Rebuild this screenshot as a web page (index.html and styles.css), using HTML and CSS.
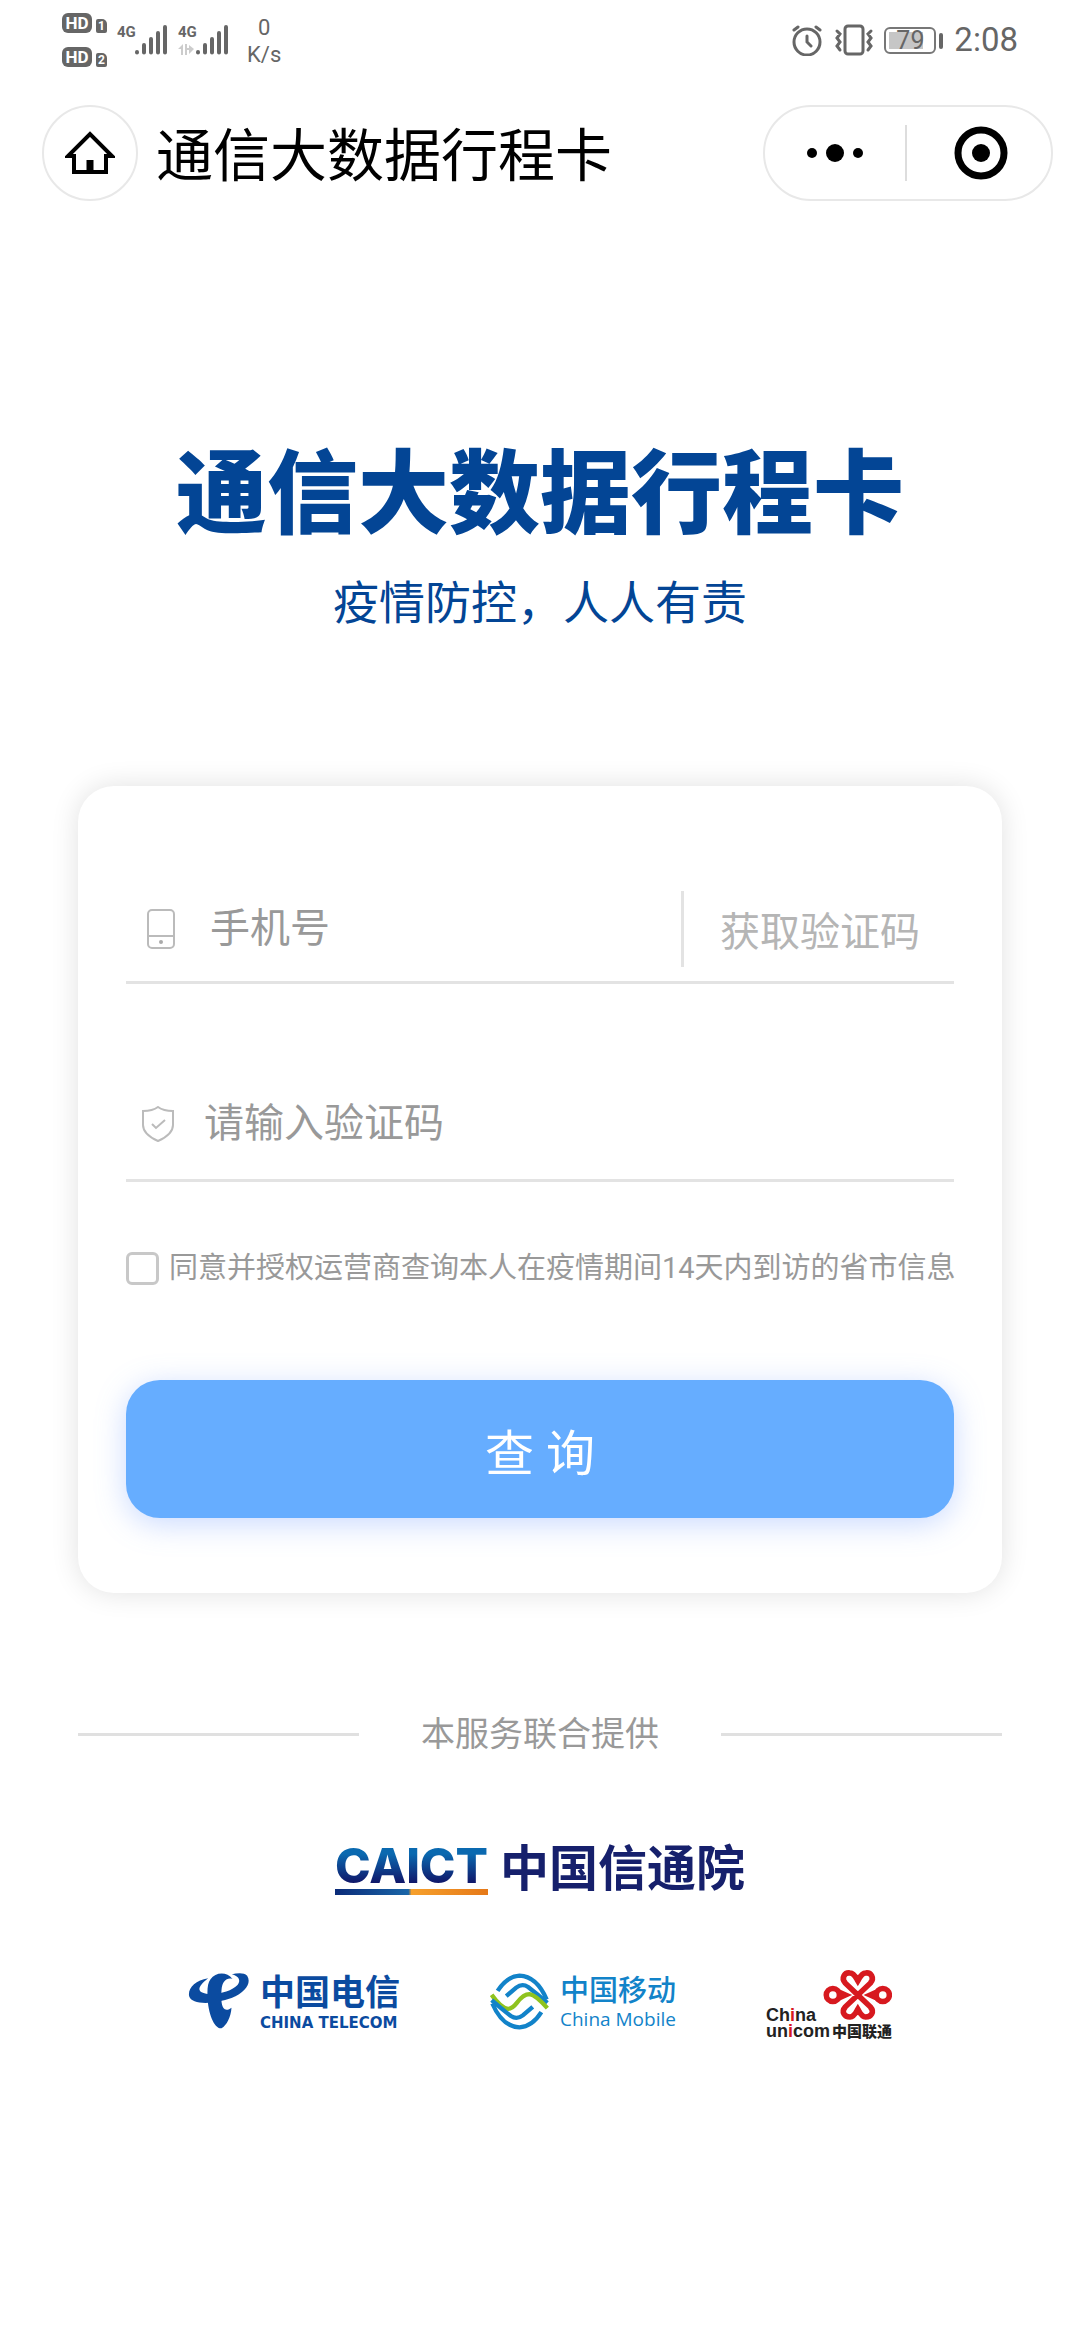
FILE: index.html
```html
<!DOCTYPE html>
<html lang="zh-CN">
<head>
    <meta charset="UTF-8">
    <meta name="viewport" content="width=device-width, initial-scale=1.0">
    <title>通信大数据行程卡</title>
    <link rel="stylesheet" href="styles.css">
</head>
<body>
    <!-- phone status bar -->
    <div class="status-bar">
        <div class="status-left">
            <div class="hd-list">
                <div class="hd"><span class="hd-label">HD</span><span class="hd-num">1</span></div>
                <div class="hd"><span class="hd-label">HD</span><span class="hd-num">2</span></div>
            </div>
            <div class="signal">
                <span class="net">4G</span>
                <svg width="33" height="32" viewBox="0 0 33 32" stroke="#666" stroke-width="4" stroke-linecap="round">
                    <path d="M2 28v.5M9 21v7.500M16 15v13.500M23 9v19.500M30 3v25.500"/>
                </svg>
            </div>
            <div class="signal">
                <span class="net">4G
                    <svg class="net-arrows" width="16" height="12" viewBox="0 0 16 12" fill="#ccc">
                        <path d="M5 0v11H3V5H0zM7 0h2v4h2v2H9v5H7zM11 1l5 4-5 5z"/>
                    </svg>
                </span>
                <svg width="33" height="32" viewBox="0 0 33 32" stroke="#666" stroke-width="4" stroke-linecap="round">
                    <path d="M2 28v.5M9 21v7.500M16 15v13.500M23 9v19.500M30 3v25.500"/>
                </svg>
            </div>
            <div class="speed">0<br>K/s</div>
        </div>
        <div class="status-right">
            <svg width="32" height="32" viewBox="0 0 32 32" fill="none" stroke="#666" stroke-width="3" stroke-linecap="round">
                <circle cx="15" cy="18" r="13"/>
                <path d="M15 12v6l4 4M2 6l4-3M28 6l-4-3"/>
            </svg>
            <svg width="40" height="32" viewBox="0 0 40 32" fill="none" stroke="#666" stroke-width="3" stroke-linecap="round">
                <rect x="11" y="2" width="18" height="28" rx="3"/>
                <path d="M3 7l3 3-3 4 3 4-3 4 3 4M37 7l-3 3 3 4-3 4 3 4-3 4"/>
            </svg>
            <div class="battery"><span class="battery-level">79</span></div>
            <span class="clock">2:08</span>
        </div>
    </div>

    <!-- mini program nav -->
    <header class="navbar">
        <button class="home" type="button" aria-label="首页">
            <svg width="50" height="46" viewBox="0 0 50 46" fill="none" stroke="#000" stroke-width="4">
                <path d="M3 26h6v16h32V26h6L25 4z"/>
                <path d="M25 42V30" stroke-width="7"/>
            </svg>
        </button>
        <div class="nav-title">通信大数据行程卡</div>
        <div class="capsule">
            <button type="button" aria-label="更多">
                <svg width="58" height="20" viewBox="0 0 58 20">
                    <circle cx="6" cy="10" r="5"/>
                    <circle cx="29" cy="10" r="9"/>
                    <circle cx="52" cy="10" r="5"/>
                </svg>
            </button>
            <button type="button" aria-label="关闭">
                <svg width="54" height="54" viewBox="0 0 54 54">
                    <circle cx="27" cy="27" r="23" fill="none" stroke="#000" stroke-width="7"/>
                    <circle cx="27" cy="27" r="9"/>
                </svg>
            </button>
        </div>
    </header>

    <main class="container">
        <h1>通信大数据行程卡</h1>
        <p class="slogan">疫情防控，人人有责</p>

        <form class="card">
            <div class="field">
                <label class="field-icon" for="phone" aria-label="手机号">
                    <svg width="28" height="40" viewBox="0 0 28 40" fill="none" stroke="#bbb" stroke-width="2">
                        <rect x="1" y="1" width="26" height="38" rx="4"/>
                        <path d="M1 27h26"/>
                        <circle cx="14" cy="33" r="2" fill="#aaa" stroke="none"/>
                    </svg>
                </label>
                <input type="tel" id="phone" placeholder="手机号">
                <button class="get-code" type="button">获取验证码</button>
            </div>
            <div class="field code-field">
                <label class="field-icon" for="code" aria-label="验证码">
                    <svg width="32" height="36" viewBox="0 0 32 36" fill="none" stroke="#bbb" stroke-width="2">
                        <path d="M16 1C12 4 7 5 1 5v14c0 7 6 12 15 16 9-4 15-9 15-16V5c-6 0-11-1-15-4z"/>
                        <path d="M10 18l4 4 9-8"/>
                    </svg>
                </label>
                <input type="text" id="code" placeholder="请输入验证码">
            </div>
            <div class="agree">
                <input type="checkbox" id="agree">
                <label for="agree">同意并授权运营商查询本人在疫情期间14天内到访的省市信息</label>
            </div>
            <button class="query" type="submit">查 询</button>
        </form>

        <footer>
            <div class="provider">本服务联合提供</div>

            <div class="caict">
                <span class="caict-en">CAICT</span>
                <span class="caict-cn">中国信通院</span>
            </div>

            <div class="logos">
                <div class="logo telecom">
                    <svg width="61" height="56" viewBox="50 68 182 168" fill="#0b4ba0">
                        <path d="M110 84C70 90 48 115 53 138c7 27 77 24 127 5 45-18 60-46 47-67-10-10-29-8-46-4 23 6 27 19 17 32-15 17-58 30-88 27-32-3-38-18 0-47z"/>
                        <path d="M117 87c15-22 49-24 66-1-17-5-31 6-33 34-2 30 0 50 10 57 7 4 14-1 20-5-2 28-14 52-30 62-22 2-40-44-42-94-1-26 1-43 9-53z"/>
                    </svg>
                    <div class="logo-text">
                        <span class="cn">中国电信</span>
                        <span class="en">CHINA TELECOM</span>
                    </div>
                </div>
                <div class="logo mobile">
                    <svg width="59" height="57" viewBox="50 68 176 172" fill="none" stroke="#1283c9" stroke-width="13">
                        <path d="M72 122Q100 78 138 76q52 2 82 72"/>
                        <path d="M98 138l30-26q18-14 36-2 26 20 58 48"/>
                        <path d="M54 134q30 42 50 42 12 0 26-18 20-26 38-26 18 2 54 42" stroke="#8fc31f"/>
                        <path d="M178 170l-30 26q-18 14-36 2-26-20-58-48"/>
                        <path d="M204 186q-28 44-66 46-52-2-82-72"/>
                    </svg>
                    <div class="logo-text">
                        <span class="cn">中国移动</span>
                        <span class="en">China Mobile</span>
                    </div>
                </div>
                <div class="logo unicom">
                    <svg width="69" height="52" viewBox="216 54 210 158" fill="none" stroke="#d7191f" stroke-width="17">
                        <path d="M322 133l-38-36c-14-16-2-33 14-31 14 1 18 14 24 24 6-10 10-23 24-24 16-2 28 15 14 31l-76 72c-14 16-2 31 14 31 14-1 18-14 24-24 6 10 10 23 24 24 16 0 28-15 14-31z"/>
                        <circle cx="246" cy="133" r="20"/>
                        <circle cx="398" cy="133" r="20"/>
                        <path d="M264 124l20 9-20 9M380 124l-20 9 20 9"/>
                    </svg>
                    <span class="en">Ch<i>i</i>na</span>
                    <span class="en">un<i>i</i>com<b>中国联通</b></span>
                </div>
            </div>
        </footer>
    </main>
</body>
</html>
```

FILE: styles.css
```css
* {
    box-sizing: border-box;
}
body {
    margin: 0;
    font-family: Roboto, "Noto Sans CJK SC", sans-serif;
    background-color: #fff;
    color: #000;
}
button, input {
    font-family: inherit;
    border: none;
    background: none;
    padding: 0;
    margin: 0;
}
svg {
    display: block;
    flex-shrink: 0;
}

/* status bar */
.status-bar {
    display: flex;
    justify-content: space-between;
    align-items: center;
    height: 80px;
    padding: 0 62px;
    color: #666;
}
.status-left, .status-right {
    display: flex;
    align-items: center;
}
.hd-list {
    display: flex;
    flex-direction: column;
    gap: 14px;
}
.hd {
    display: flex;
    align-items: flex-end;
    gap: 4px;
}
.hd-label {
    width: 30px;
    height: 20px;
    border-radius: 6px;
    background: #666;
    color: #fff;
    font-size: 17px;
    font-weight: bold;
    line-height: 20px;
    text-align: center;
}
.hd-num {
    width: 11px;
    height: 14px;
    border-radius: 2px 5px 2px 2px;
    background: #666;
    color: #fff;
    font-size: 12px;
    font-weight: bold;
    line-height: 14px;
    text-align: center;
}
.signal {
    display: flex;
    margin-left: 10px;
}
.net {
    width: 18px;
    font-size: 15px;
    font-weight: bold;
    line-height: 16px;
}
.net-arrows {
    margin-top: 4px;
}
.speed {
    margin-left: 18px;
    padding-top: 2px;
    font-size: 22px;
    line-height: 27px;
    text-align: center;
}
.status-right {
    gap: 10px;
}
.battery {
    position: relative;
    width: 52px;
    height: 27px;
    margin-right: 8px;
    padding: 3px;
    border: 2px solid #777;
    border-radius: 6px;
}
.battery::after {
    content: "";
    position: absolute;
    top: 4px;
    right: -9px;
    width: 4px;
    height: 16px;
    border-radius: 2px;
    background: #666;
}
.battery-level {
    display: block;
    width: 79%;
    height: 100%;
    padding-left: 7px;
    background: #c6c6c6;
    font-size: 25px;
    line-height: 17px;
}
.clock {
    font-size: 33px;
    line-height: 40px;
}

/* nav */
.navbar {
    display: flex;
    align-items: center;
    padding: 25px 27px 0 42px;
}
.home {
    display: flex;
    align-items: center;
    justify-content: center;
    width: 96px;
    height: 96px;
    border: 2px solid #e8e8e8;
    border-radius: 50%;
}
.nav-title {
    flex: 1;
    margin-left: 18px;
    padding-top: 8px;
    font-size: 57px;
    line-height: 88px;
}
.capsule {
    display: flex;
    align-items: center;
    width: 290px;
    height: 96px;
    border: 2px solid #e8e8e8;
    border-radius: 48px;
}
.capsule button {
    display: flex;
    flex: 1;
    align-items: center;
    justify-content: center;
    height: 56px;
}
.capsule button + button {
    padding-left: 4px;
    border-left: 2px solid #ddd;
}

/* content */
.container {
    padding: 244px 78px 80px;
}
h1 {
    margin: 0;
    font-size: 91px;
    font-weight: 900;
    line-height: 100px;
    color: #034595;
    text-align: center;
}
.slogan {
    margin: 28px 0 0;
    font-size: 46px;
    line-height: 60px;
    color: #034595;
    text-align: center;
}
.card {
    margin-top: 153px;
    padding: 90px 48px 75px;
    border-radius: 36px;
    background: #fff;
    box-shadow: 0 0 28px rgba(0, 0, 0, 0.12);
}
.field {
    display: flex;
    align-items: center;
    height: 108px;
    border-bottom: 3px solid #e3e3e3;
}
.field + .field {
    margin-top: 90px;
}
.field-icon {
    display: flex;
    justify-content: center;
    width: 70px;
}
.field input {
    flex: 1;
    min-width: 0;
    height: 100%;
    margin-left: 14px;
    font-size: 40px;
    color: #333;
}
.field input::placeholder {
    color: #999;
    opacity: 1;
}
.code-field {
    padding-bottom: 6px;
}
.code-field .field-icon {
    width: 64px;
}
.get-code {
    height: 76px;
    padding: 0 34px 0 36px;
    border-left: 3px solid #e3e3e3;
    font-size: 40px;
    color: #b5b5b5;
}
.agree {
    display: flex;
    align-items: center;
    gap: 10px;
    margin-top: 66px;
    font-size: 29px;
    line-height: 40px;
    color: #999;
    white-space: nowrap;
}
.agree input {
    flex-shrink: 0;
    width: 33px;
    height: 33px;
    appearance: none;
    border: 3px solid #c8c8c8;
    border-radius: 6px;
}
.agree input:checked {
    background: #66adff;
}
.query {
    display: block;
    width: 100%;
    height: 138px;
    margin-top: 92px;
    border-radius: 34px;
    background: #66adff;
    box-shadow: 0 6px 30px rgba(102, 150, 255, 0.35);
    font-size: 49px;
    color: #fff;
}

/* providers */
footer {
    margin-top: 116px;
}
.provider {
    display: flex;
    align-items: center;
    gap: 62px;
    font-size: 34px;
    line-height: 50px;
    color: #999;
}
.provider::before, .provider::after {
    content: "";
    flex: 1;
    height: 3px;
    background: #e0e0e0;
}
.caict {
    display: flex;
    align-items: center;
    justify-content: center;
    gap: 12px;
    margin-top: 86px;
    font-size: 49px;
    font-weight: bold;
    line-height: 50px;
    color: #16206c;
}
.caict-en {
    height: 50px;
    border-bottom: 6px solid;
    border-image: linear-gradient(90deg, #0a2a78 0%, #1a66a8 48%, #f6a02c 50%, #e57818 100%) 1;
    background: linear-gradient(#0a69b0 20%, #10186a 85%);
    -webkit-background-clip: text;
    background-clip: text;
    color: transparent;
    font-family: Inter, sans-serif;
    font-size: 48px;
    font-weight: 800;
    line-height: 42px;
}
.logos {
    display: flex;
    justify-content: center;
    gap: 90px;
    margin-top: 74px;
}
.logo {
    display: flex;
    align-items: flex-start;
    white-space: nowrap;
}
.logo-text {
    display: flex;
    flex-direction: column;
    margin-left: 11px;
}
.telecom, .mobile {
    padding-top: 4px;
}
.telecom .cn {
    font-size: 35px;
    font-weight: bold;
    line-height: 42px;
    color: #0b4ba0;
}
.telecom .en {
    font-family: "DejaVu Sans", sans-serif;
    font-size: 15px;
    font-weight: bold;
    line-height: 16px;
    color: #0b4ba0;
}
.mobile .cn {
    font-size: 29px;
    font-weight: 500;
    line-height: 36px;
    color: #1283c9;
}
.mobile .en {
    font-family: "Open Sans", sans-serif;
    font-size: 19px;
    font-weight: 500;
    line-height: 20px;
    color: #1283c9;
}
.unicom {
    flex-direction: column;
}
.unicom svg {
    align-self: flex-end;
}
.unicom .en {
    display: flex;
    align-items: center;
    height: 16px;
    font-family: "Liberation Sans", sans-serif;
    font-size: 18px;
    font-weight: bold;
    line-height: 16px;
    color: #222;
}
.unicom .en:nth-of-type(1) {
    margin-top: -14px;
}
.unicom i {
    font-style: normal;
    color: #d7191f;
}
.unicom b {
    margin-left: 2px;
    font-family: "Noto Sans CJK SC", sans-serif;
    font-size: 15px;
}
```
